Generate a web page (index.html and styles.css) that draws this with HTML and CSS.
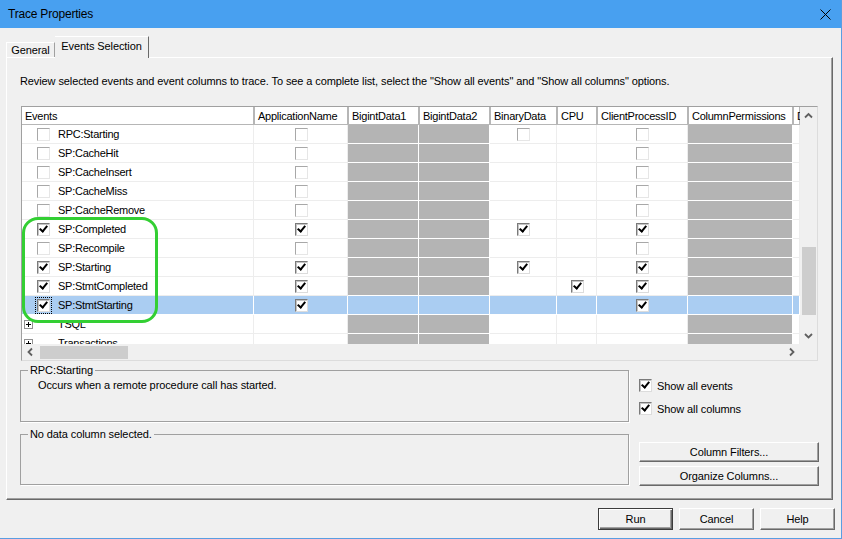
FILE: index.html
```html
<!DOCTYPE html>
<html lang="en">
<head>
    <meta charset="UTF-8">
    <title>Trace Properties</title>
    <link rel="stylesheet" href="styles.css">
</head>
<body>
<div class="window">
    <div class="titlebar">
        <span class="title">Trace Properties</span>
        <svg class="close" width="11" height="11" viewBox="0 0 11 11"><path d="M0.5 0.5 L10.5 10.5 M10.5 0.5 L0.5 10.5" stroke="#000" stroke-width="1" fill="none"/></svg>
    </div>

    <div class="tabs">
        <div class="tab">General</div>
        <div class="tab active">Events Selection</div>
    </div>

    <div class="panel">
        <p class="intro">Review selected events and event columns to trace. To see a complete list, select the "Show all events" and "Show all columns" options.</p>

        <div class="grid">
            <div class="grid-body">
                <div class="grid-view">
                    <table class="events">
                        <colgroup>
                            <col style="width:232px"><col style="width:94px"><col style="width:71px"><col style="width:71px"><col style="width:67px"><col style="width:40px"><col style="width:91px"><col style="width:105px"><col style="width:7px">
                        </colgroup>
                        <thead>
                            <tr>
                                <th class="first">Events</th>
                                <th>ApplicationName</th>
                                <th>BigintData1</th>
                                <th>BigintData2</th>
                                <th>BinaryData</th>
                                <th>CPU</th>
                                <th>ClientProcessID</th>
                                <th>ColumnPermissions</th>
                                <th>DatabaseID</th>
                            </tr>
                        </thead>
                        <tbody>
                            <tr>
                                <td><div class="ev"><span class="cb"></span>RPC:Starting</div></td>
                                <td class="c"><span class="cb"></span></td>
                                <td class="g"></td><td class="g"></td>
                                <td class="c"><span class="cb"></span></td>
                                <td></td>
                                <td class="c"><span class="cb"></span></td>
                                <td class="g"></td><td></td>
                            </tr>
                            <tr>
                                <td><div class="ev"><span class="cb"></span>SP:CacheHit</div></td>
                                <td class="c"><span class="cb"></span></td>
                                <td class="g"></td><td class="g"></td>
                                <td></td><td></td>
                                <td class="c"><span class="cb"></span></td>
                                <td class="g"></td><td></td>
                            </tr>
                            <tr>
                                <td><div class="ev"><span class="cb"></span>SP:CacheInsert</div></td>
                                <td class="c"><span class="cb"></span></td>
                                <td class="g"></td><td class="g"></td>
                                <td></td><td></td>
                                <td class="c"><span class="cb"></span></td>
                                <td class="g"></td><td></td>
                            </tr>
                            <tr>
                                <td><div class="ev"><span class="cb"></span>SP:CacheMiss</div></td>
                                <td class="c"><span class="cb"></span></td>
                                <td class="g"></td><td class="g"></td>
                                <td></td><td></td>
                                <td class="c"><span class="cb"></span></td>
                                <td class="g"></td><td></td>
                            </tr>
                            <tr>
                                <td><div class="ev"><span class="cb"></span>SP:CacheRemove</div></td>
                                <td class="c"><span class="cb"></span></td>
                                <td class="g"></td><td class="g"></td>
                                <td></td><td></td>
                                <td class="c"><span class="cb"></span></td>
                                <td class="g"></td><td></td>
                            </tr>
                            <tr>
                                <td><div class="ev"><span class="cb on"></span>SP:Completed</div></td>
                                <td class="c"><span class="cb on"></span></td>
                                <td class="g"></td><td class="g"></td>
                                <td class="c"><span class="cb on"></span></td>
                                <td></td>
                                <td class="c"><span class="cb on"></span></td>
                                <td class="g"></td><td></td>
                            </tr>
                            <tr>
                                <td><div class="ev"><span class="cb"></span>SP:Recompile</div></td>
                                <td class="c"><span class="cb"></span></td>
                                <td class="g"></td><td class="g"></td>
                                <td></td><td></td>
                                <td class="c"><span class="cb"></span></td>
                                <td class="g"></td><td></td>
                            </tr>
                            <tr>
                                <td><div class="ev"><span class="cb on"></span>SP:Starting</div></td>
                                <td class="c"><span class="cb on"></span></td>
                                <td class="g"></td><td class="g"></td>
                                <td class="c"><span class="cb on"></span></td>
                                <td></td>
                                <td class="c"><span class="cb on"></span></td>
                                <td class="g"></td><td></td>
                            </tr>
                            <tr>
                                <td><div class="ev"><span class="cb on"></span>SP:StmtCompleted</div></td>
                                <td class="c"><span class="cb on"></span></td>
                                <td class="g"></td><td class="g"></td>
                                <td></td>
                                <td class="c"><span class="cb on"></span></td>
                                <td class="c"><span class="cb on"></span></td>
                                <td class="g"></td><td></td>
                            </tr>
                            <tr class="sel">
                                <td><div class="ev"><span class="cb on focus"></span>SP:StmtStarting</div></td>
                                <td class="c"><span class="cb on"></span></td>
                                <td></td><td></td>
                                <td></td><td></td>
                                <td class="c"><span class="cb on"></span></td>
                                <td></td><td></td>
                            </tr>
                            <tr>
                                <td><div class="cat"><span class="plus"></span>TSQL</div></td>
                                <td></td>
                                <td class="g"></td><td class="g"></td>
                                <td></td><td></td><td></td>
                                <td class="g"></td><td></td>
                            </tr>
                            <tr>
                                <td><div class="cat"><span class="plus"></span>Transactions</div></td>
                                <td></td>
                                <td class="g"></td><td class="g"></td>
                                <td></td><td></td><td></td>
                                <td class="g"></td><td></td>
                            </tr>
                        </tbody>
                    </table>
                </div>
                <div class="vscroll">
                    <div class="arrow"><svg width="17" height="17"><path d="M5 10.5 L8.5 7 L12 10.5" stroke="#606060" stroke-width="1.8" fill="none"/></svg></div>
                    <div class="vthumb"></div>
                    <div class="arrow down"><svg width="17" height="17"><path d="M5 7 L8.5 10.5 L12 7" stroke="#606060" stroke-width="1.8" fill="none"/></svg></div>
                </div>
            </div>
            <div class="hscroll">
                <div class="arrow"><svg width="17" height="16"><path d="M10 4.5 L6.5 8 L10 11.5" stroke="#606060" stroke-width="1.8" fill="none"/></svg></div>
                <div class="hthumb"></div>
                <div class="arrow right"><svg width="17" height="16"><path d="M7 4.5 L10.5 8 L7 11.5" stroke="#606060" stroke-width="1.8" fill="none"/></svg></div>
                <div class="corner"></div>
            </div>
            <div class="highlight"></div>
        </div>

        <div class="lower">
            <div class="groups">
                <fieldset class="group first-group">
                    <legend>RPC:Starting</legend>
                    <div class="desc">Occurs when a remote procedure call has started.</div>
                </fieldset>
                <fieldset class="group second-group">
                    <legend>No data column selected.</legend>
                </fieldset>
            </div>
            <div class="side">
                <label class="check"><span class="cb on"></span>Show all events</label>
                <label class="check"><span class="cb on"></span>Show all columns</label>
                <button class="btn wide filters">Column Filters...</button>
                <button class="btn wide">Organize Columns...</button>
            </div>
        </div>
    </div>

    <div class="actions">
        <button class="btn default">Run</button>
        <button class="btn">Cancel</button>
        <button class="btn">Help</button>
    </div>
</div>
</body>
</html>
```

FILE: styles.css
```css
body {
    margin: 0;
    background-color: #f0f0f0;
    font-family: "Liberation Sans", Arial, sans-serif;
    font-size: 11px;
    color: #000;
    letter-spacing: -0.1px;
}

.window {
    width: 842px;
    height: 539px;
    box-sizing: border-box;
    border-right: 1px solid #5a9ee2;
    border-bottom: 1px solid #5a9ee2;
    overflow: hidden;
}

.titlebar {
    height: 28px;
    background-color: #48a0f0;
    display: flex;
    align-items: center;
    justify-content: space-between;
    padding: 0 10px 0 8px;
}
.title {
    font-size: 12px;
    letter-spacing: -0.2px;
}

/* tabs */
.tabs {
    height: 29px;
    box-sizing: border-box;
    padding-left: 6px;
    display: flex;
    align-items: flex-end;
}
.tab {
    width: 49px;
    height: 15px;
    box-sizing: border-box;
    border: 1px solid;
    border-color: #fff #a0a0a0 transparent #fff;
    border-bottom: 0;
    text-align: center;
    line-height: 14px;
}
.tab.active {
    width: 94px;
    height: 22px;
    margin-bottom: -1px;
    padding-top: 2px;
    background-color: #f0f0f0;
    border-color: #fff #696969 transparent #fff;
    border-left: 0;
    position: relative;
    z-index: 1;
}

.panel {
    margin-left: 6px;
    width: 827px;
    height: 443px;
    box-sizing: border-box;
    border: 1px solid;
    border-color: #fff #696969 #696969 #fff;
    box-shadow: inset -1px -1px 0 #a0a0a0;
    padding: 17px 0 0 13px;
}
.intro {
    margin: 0;
    line-height: 13px;
}

/* events grid */
.grid {
    position: relative;
    margin: 18px 0 0 1px;
    width: 797px;
    height: 255px;
    box-sizing: border-box;
    border: 1px solid;
    border-color: #a0a0a0 #dcdcdc #dcdcdc #a0a0a0;
    background-color: #fff;
}
.grid-body {
    display: flex;
    height: 237px;
}
.grid-view {
    width: 778px;
    overflow: hidden;
}
.events {
    table-layout: fixed;
    width: 778px;
    border-spacing: 0;
    letter-spacing: -0.25px;
}
.events thead tr {
    height: 18px;
}
.events th {
    padding: 0 4px 1px;
    font-weight: normal;
    text-align: left;
    white-space: nowrap;
    overflow: hidden;
    background-color: #fff;
    box-shadow: inset 1px 0 0 #b6b6b6, inset -1px -1px 0 #b6b6b6;
}
.events th.first {
    padding-left: 3px;
    box-shadow: inset -1px -1px 0 #b6b6b6;
}
.events tbody tr {
    height: 19px;
}
.events td {
    padding: 0 0 1px;
    line-height: 13px;
    vertical-align: middle;
    box-shadow: inset -1px -1px 0 #ededed;
    white-space: nowrap;
}
.events td.c {
    text-align: center;
}
.events td.g {
    background-color: #b4b4b4;
    box-shadow: inset -1px -1px 0 #fff;
}
.events tr.sel td {
    background-color: #aacdf2;
    box-shadow: inset -1px -1px 0 #fff;
}

.ev {
    display: flex;
    align-items: center;
    gap: 8px;
    padding-left: 15px;
}
.cat {
    display: flex;
    align-items: center;
    gap: 25px;
    padding-left: 2px;
}
.plus {
    width: 9px;
    height: 9px;
    box-sizing: border-box;
    border: 1px solid #919191;
    background:
        linear-gradient(#000, #000) center / 5px 1px no-repeat,
        linear-gradient(#000, #000) center / 1px 5px no-repeat,
        #fff;
}

/* checkbox */
.cb {
    display: inline-block;
    position: relative;
    width: 13px;
    height: 13px;
    box-sizing: border-box;
    background-color: #fff;
    border: 1px solid;
    border-color: #a8a8a8 #e6e6e6 #e6e6e6 #a8a8a8;
    vertical-align: middle;
}
.cb.on {
    border-color: #7a7a7a #dcdcdc #dcdcdc #7a7a7a;
    box-shadow: inset 1px 1px 0 #c4c4c4;
}
.cb.on::after {
    content: "";
    position: absolute;
    left: 3px;
    top: 0px;
    width: 3px;
    height: 6px;
    border: solid #000;
    border-width: 0 2px 2px 0;
    transform: rotate(40deg);
}
.cb.focus {
    outline: 1px dotted #000;
    outline-offset: 1px;
}

/* scrollbars */
.vscroll {
    width: 17px;
    display: flex;
    flex-direction: column;
    background-color: #f0f0f0;
}
.arrow {
    width: 17px;
    height: 17px;
    flex-shrink: 0;
}
.arrow svg {
    display: block;
}
.vthumb {
    margin: 123px 1px 0 2px;
    height: 68px;
    background-color: #cdcdcd;
}
.arrow.down {
    margin-top: auto;
}
.hscroll {
    height: 16px;
    display: flex;
    background-color: #f0f0f0;
}
.hscroll .arrow {
    height: 16px;
}
.hthumb {
    margin: 2px 0 1px 1px;
    width: 88px;
    background-color: #cdcdcd;
}
.arrow.right {
    margin-left: auto;
}
.corner {
    width: 17px;
}

.highlight {
    position: absolute;
    left: 0;
    top: 110px;
    width: 136px;
    height: 106px;
    box-sizing: border-box;
    border: 3px solid #33cf33;
    border-radius: 16px;
    pointer-events: none;
}

/* lower part */
.lower {
    display: flex;
    gap: 10px;
    margin-top: 3px;
}
.groups {
    width: 609px;
}
.group {
    margin: 0;
    padding: 0 7px;
    border: 1px solid #a0a0a0;
    box-shadow: 1px 1px 0 #fff;
    box-sizing: border-box;
}
.group legend {
    padding: 0 2px;
    line-height: 13px;
}
.first-group {
    height: 58px;
}
.second-group {
    height: 57px;
    margin-top: 6px;
}
.desc {
    padding-left: 10px;
    margin-top: 2px;
    line-height: 13px;
}

.side {
    width: 180px;
    padding-top: 15px;
    display: flex;
    flex-direction: column;
}
.check {
    display: flex;
    align-items: center;
    gap: 5px;
    height: 13px;
    margin-bottom: 10px;
}
.btn {
    height: 20px;
    padding: 0;
    font-family: inherit;
    font-size: 11px;
    letter-spacing: -0.1px;
    color: #000;
    background-color: #f0f0f0;
    border: 1px solid;
    border-color: #fff #696969 #696969 #fff;
    box-shadow: inset -1px -1px 0 #a0a0a0;
}
.btn.wide {
    width: 180px;
    margin-bottom: 4px;
}
.btn.filters {
    margin-top: 17px;
}

.actions {
    display: flex;
    justify-content: flex-end;
    gap: 6px;
    margin-top: 8px;
    padding-right: 6px;
}
.actions .btn {
    width: 75px;
    height: 22px;
}
.btn.default {
    border-color: #3c3c3c;
    box-shadow: inset 1px 1px 0 #fff, inset -1px -1px 0 #696969, inset -2px -2px 0 #a0a0a0;
}
```
